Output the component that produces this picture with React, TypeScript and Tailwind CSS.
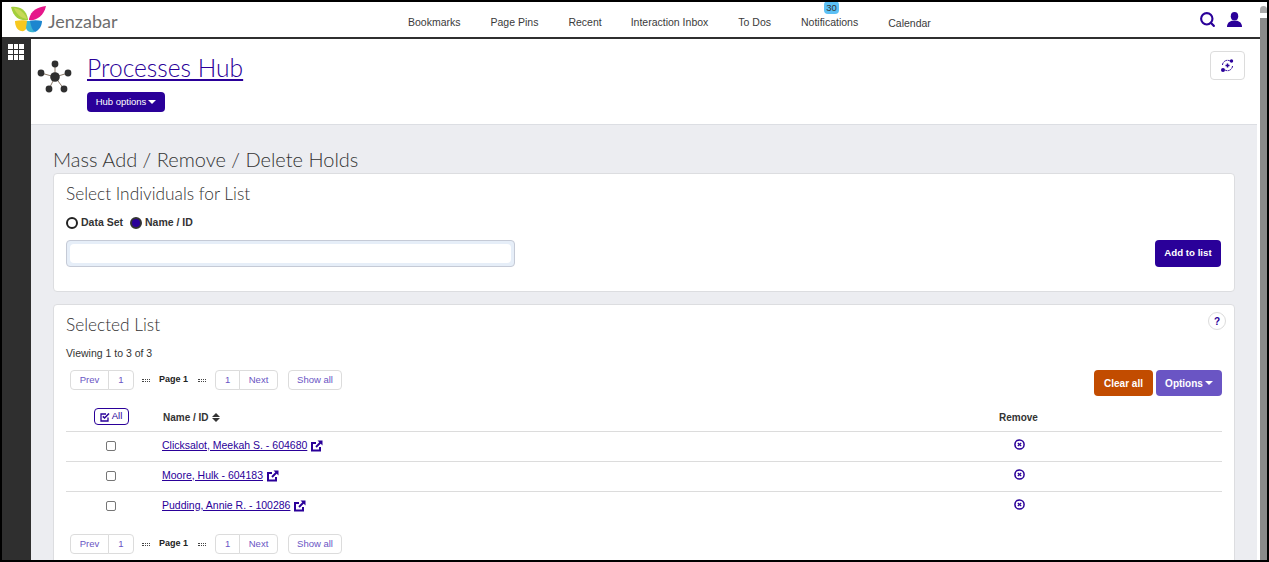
import React from 'react';
import { Search } from 'lucide-react';

const navItems = [
  { label: 'Bookmarks', left: 'ml-0' },
  { label: 'Page Pins', left: 'ml-[30px]' },
  { label: 'Recent', left: 'ml-[30px]' },
  { label: 'Interaction Inbox', left: 'ml-[29px]' },
  { label: 'To Dos', left: 'ml-[30px]' },
  { label: 'Notifications', left: 'ml-[30px]' },
  { label: 'Calendar', left: 'ml-[30px]' },
];

const people = [
  { name: 'Clicksalot, Meekah S. - 604680' },
  { name: 'Moore, Hulk - 604183' },
  { name: 'Pudding, Annie R. - 100286' },
];

const heading = "font-['Lato',sans-serif] font-light";

function Logo() {
  return (
    <svg width="35" height="27" viewBox="0 0 35 27">
      <path d="M0 1 C8 0 15 3 17 13 L17 14 C10 15 3 13 0 1Z" fill="#a3cf3c" />
      <path d="M3 2 C9 3 14 7 16 13 C10 12 5 8 3 2Z" fill="#c7d957" />
      <path d="M35 0 C27 1 20 4 18 13 L18 14 C25 15 33 10 35 0Z" fill="#e6178a" />
      <path d="M4 15 C8 14 14 14 17 15 C17 21 15 26 10 25 C6 24 4 20 4 15Z" fill="#f7c81e" />
      <path d="M18 15 C22 14 27 14 31 15 C31 20 28 24 24 26 C20 24 18 20 18 15Z" fill="#1c86cf" />
      <path d="M16 15 L19 15 C20 20 21 24 24 26 C20 27 16 26 15 22Z" fill="#3bb4d2" />
    </svg>
  );
}

function HubIcon() {
  const outer = [[55, 65], [68, 74], [64, 90], [49, 90], [41, 74]];
  return (
    <svg width="36" height="36" viewBox="36 60 36 36">
      {outer.map(([x, y]) => (
        <line key={x} x1="55" y1="78" x2={x} y2={y} stroke="#8a7a6a" strokeWidth="1" />
      ))}
      {outer.map(([x, y]) => (
        <circle key={x} cx={x} cy={y} r="3.4" fill="#2f2f2f" />
      ))}
      <circle cx="55" cy="78" r="4.8" fill="#2f2f2f" />
    </svg>
  );
}

function UserIcon() {
  return (
    <svg width="15" height="15" viewBox="0 0 15 15" fill="#2a0099">
      <ellipse cx="7.5" cy="4.2" rx="3.7" ry="4.2" />
      <path d="M0 15 C0 11 2.5 9.5 5 8.8 L10 8.8 C12.5 9.5 15 11 15 15Z" />
    </svg>
  );
}

function SyncIcon() {
  return (
    <svg width="13" height="13" viewBox="0 0 13 13" fill="none" stroke="#2a0099" strokeWidth="1">
      <path d="M1.5 6 A5 5 0 0 1 9 2" strokeDasharray="2 0.6" />
      <path d="M11.5 7 A5 5 0 0 1 4 11" strokeDasharray="2 0.6" />
      <circle cx="10.5" cy="2" r="1.7" fill="#2a0099" stroke="none" />
      <circle cx="2" cy="11" r="2" fill="#2a0099" stroke="none" />
      <path d="M4.5 6.5 H8.5 M6.5 4.5 V8.5" strokeWidth="1.5" />
    </svg>
  );
}

function LinkIcon() {
  return (
    <svg width="12" height="12" viewBox="0 0 12 12" fill="none" stroke="#2a0099">
      <path d="M9 7 V10.5 H1 V3 H5" strokeWidth="2" />
      <path d="M5 7 L9.5 2.5" strokeWidth="2" />
      <path d="M6.5 0.5 H11.5 V5.5 Z" fill="#2a0099" stroke="none" />
    </svg>
  );
}

function RemoveIcon() {
  return (
    <svg width="11" height="11" viewBox="0 0 11 11" fill="none" stroke="#2a0099">
      <circle cx="5.5" cy="5.5" r="4.6" strokeWidth="1.5" />
      <path d="M3.8 4 L7.2 7 M7.2 4 L3.8 7" strokeWidth="1.2" />
    </svg>
  );
}

function CheckSquareIcon() {
  return (
    <svg width="10" height="10" viewBox="0 0 10 10" fill="none" stroke="#2a0099" strokeWidth="1.3">
      <path d="M8 5.5 V9 H1 V2 H6" />
      <path d="M2.8 4.3 L4.6 6 L9 1.5" strokeWidth="1.6" />
    </svg>
  );
}

function Caret() {
  return <span className="ml-[2px] inline-block h-0 w-0 border-x-[4px] border-t-[4px] border-x-transparent border-t-current" />;
}

function Pager() {
  const cell = 'flex h-[20px] items-center justify-center border border-[#dcdcdc] bg-white text-[#6a55c4]';
  return (
    <div className="flex items-center pl-[4px] text-[9.5px]">
      <div className={`${cell} w-[39px] rounded-l-sm`}>Prev</div>
      <div className={`${cell} -ml-px w-[26px] rounded-r-sm`}>1</div>
      <span className="ml-[8px] h-[3px] w-[8px] border-y border-dotted border-[#444]" />
      <span className="ml-[9px] text-[9px] font-bold text-[#222]">Page 1</span>
      <span className="ml-[10px] h-[3px] w-[8px] border-y border-dotted border-[#444]" />
      <div className={`${cell} ml-[9px] w-[25px] rounded-l-sm`}>1</div>
      <div className={`${cell} -ml-px w-[39px] rounded-r-sm`}>Next</div>
      <div className={`${cell} ml-[10px] w-[54px] rounded-sm`}>Show all</div>
    </div>
  );
}

export default function App() {
  return (
    <div className="flex h-[562px] w-[1269px] overflow-hidden border-2 border-black bg-white font-['Liberation_Sans',Arial,sans-serif] text-[10.5px] text-[#333]">
      <div className="flex min-w-0 flex-1 flex-col">
        <header className="flex h-[37px] shrink-0 items-center border-b-2 border-[#2f2f2f] bg-white">
          <div className="flex w-[406px] items-center pl-[9px]">
            <Logo />
            <span className="ml-[2px] mt-[3px] font-['Lato',sans-serif] text-[18px] leading-none text-[#6d6d6d]">Jenzabar</span>
          </div>
          <nav className="mt-[7px] flex items-center">
            {navItems.map((item) => (
              <div key={item.label} className={`relative whitespace-nowrap text-[#3a3a3a] ${item.left} ${item.label === 'Calendar' ? 'mt-[2px]' : ''}`}>
                {item.label === 'Notifications' && (
                  <span className="absolute left-[23px] top-[-14px] flex h-[13px] w-[15px] items-center justify-center rounded-sm bg-[#5cc0f5] text-[9.5px] leading-none text-[#333]">30</span>
                )}
                {item.label}
              </div>
            ))}
          </nav>
          <div className="ml-auto flex items-center gap-[11px] pr-[18px] text-[#2a0099]">
            <Search size={17} strokeWidth={3} />
            <UserIcon />
          </div>
        </header>

        <div className="flex min-h-0 flex-1">
          <aside className="flex w-[29px] shrink-0 justify-center bg-[#2f2f2f] pr-px pt-[5px]">
            <div className="grid h-[16px] w-[16px] grid-cols-3 gap-px">
              {Array.from({ length: 9 }).map((_, i) => (
                <div key={i} className="bg-white" />
              ))}
            </div>
          </aside>

          <div className="min-w-0 flex-1">
            <section className="mr-[3px] flex h-[86px] border-b border-[#dcdee3] bg-white pr-[12px]">
              <div className="ml-[5px] mt-[20px]">
                <HubIcon />
              </div>
              <div className="ml-[15px] pt-[11px]">
                <a href="#" className={`${heading} block text-[24.6px] leading-[36px] text-[#2a0099] underline`}>Processes Hub</a>
                <button className="mt-[6px] flex h-[20px] w-[78px] items-center justify-center rounded-sm bg-[#2a0099] text-[9.5px] text-white">
                  Hub options<Caret />
                </button>
              </div>
              <button className="ml-auto mt-[12px] flex h-[29px] w-[35px] items-center justify-center rounded-sm border border-[#dcdcdc] bg-white">
                <SyncIcon />
              </button>
            </section>

            <main className="mr-[3px] h-[500px] bg-[#ecedf1] pl-[22px] pr-[22px] pt-[22px]">
              <h1 className={`${heading} text-[20px] leading-[24px] text-[#333]`}>Mass Add / Remove / Delete Holds</h1>

              <section className="mt-[2px] h-[119px] rounded-sm border border-[#dcdde0] bg-white px-[12px] pt-[9px]">
                <h2 className={`${heading} text-[17.3px] leading-[22px] text-[#333]`}>Select Individuals for List</h2>
                <div className="mt-[10px] flex items-center text-[10.5px] font-bold text-[#333]">
                  <span className="h-[12px] w-[12px] rounded-full border-2 border-[#222] bg-white" />
                  <span className="ml-[3px]">Data Set</span>
                  <span className="ml-[7px] h-[12px] w-[12px] rounded-full border-2 border-[#333] bg-[#2a0099]" />
                  <span className="ml-[3px]">Name / ID</span>
                </div>
                <div className="mt-[9px] flex items-start justify-between">
                  <div className="h-[27px] w-[449px] rounded-sm border border-[#c5cad6] bg-[#e6eef8] p-[3px]">
                    <input className="block h-full w-full rounded-sm bg-white outline-none" />
                  </div>
                  <button className="mr-px flex h-[27px] w-[66px] items-center justify-center rounded-sm bg-[#2a0099] text-[9.7px] font-bold text-white">Add to list</button>
                </div>
              </section>

              <section className="mt-[12px] rounded-sm border border-[#dcdde0] bg-white px-[12px] pb-[20px] pt-[9px]">
                <div className="flex items-start justify-between">
                  <h2 className={`${heading} text-[17.3px] leading-[22px] text-[#333]`}>Selected List</h2>
                  <span className="mr-[-4px] mt-[-2px] flex h-[18px] w-[18px] items-center justify-center rounded-full border border-[#dcdcdc] text-[10px] font-bold text-[#2a0099]">?</span>
                </div>
                <p className="mt-[10px] leading-[14px]">Viewing 1 to 3 of 3</p>

                <div className="mt-[10px] flex items-start justify-between">
                  <Pager />
                  <div className="flex gap-[3px]">
                    <button className="flex h-[26px] w-[59px] items-center justify-center rounded-sm bg-[#c24c00] text-[10px] font-bold text-white">Clear all</button>
                    <button className="flex h-[26px] w-[66px] items-center justify-center rounded-sm bg-[#6a55c4] text-[10px] font-bold text-white">Options<Caret /></button>
                  </div>
                </div>

                <div className="flex h-[36px] items-center border-b border-[#dcdcdc] pt-[6px] text-[10px] font-bold">
                  <div className="flex w-[96px] justify-center">
                    <span className="ml-[-6px] flex h-[17px] w-[35px] items-center justify-center gap-[2px] rounded-sm border border-[#2a0099] text-[9.5px] font-normal text-[#2a0099]">
                      <CheckSquareIcon />All
                    </span>
                  </div>
                  <div className="ml-px mt-px flex w-[836px] items-center">
                    Name / ID
                    <span className="ml-[3px] flex flex-col gap-px">
                      <span className="h-0 w-0 border-x-[4px] border-b-[4px] border-x-transparent border-b-[#333]" />
                      <span className="h-0 w-0 border-x-[4px] border-t-[4px] border-x-transparent border-t-[#333]" />
                    </span>
                  </div>
                  <div className="mt-px">Remove</div>
                </div>

                {people.map((p, i) => (
                  <div key={p.name} className={`flex items-center pb-[2px] ${i < 2 ? 'h-[30px] border-b border-[#dcdcdc]' : 'h-[29px]'}`}>
                    <div className="flex w-[90px] justify-center">
                      <span className="block h-[10px] w-[10px] rounded-[2px] border border-[#767676] bg-white" />
                    </div>
                    <div className="ml-[6px] flex w-[852px] items-center gap-[4px]">
                      <a href="#" className="text-[#2a0099] underline">{p.name}</a>
                      <LinkIcon />
                    </div>
                    <span className="mt-[-2px]">
                      <RemoveIcon />
                    </span>
                  </div>
                ))}

                <div className="mt-[13px]">
                  <Pager />
                </div>
              </section>
            </main>
          </div>
        </div>
      </div>

      <div className="flex w-[7px] shrink-0 flex-col bg-white pt-[4px]">
        <div className="h-[7px] rounded-t-sm bg-[#a8a8a8]" />
        <div className="mt-[5px] flex-1 bg-[#8a8a8a]" />
      </div>
    </div>
  );
}
